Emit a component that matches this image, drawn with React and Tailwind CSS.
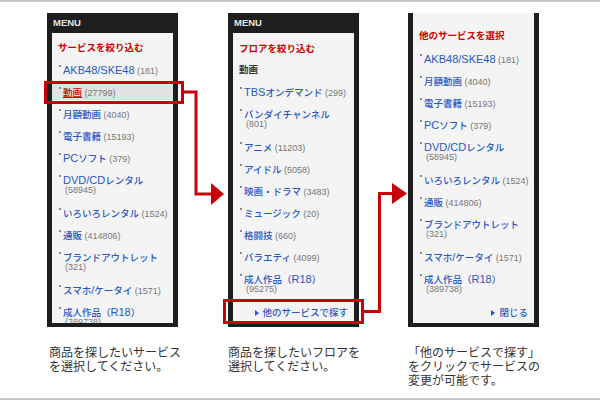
import React from 'react';

const services = [
  { label: 'AKB48/SKE48', count: '181' },
  { label: '動画', count: '27799', active: true },
  { label: '月額動画', count: '4040' },
  { label: '電子書籍', count: '15193' },
  { label: 'PCソフト', count: '379' },
  { label: 'DVD/CDレンタル', count: '58945', wrap: true },
  { label: 'いろいろレンタル', count: '1524' },
  { label: '通販', count: '414806' },
  { label: 'ブランドアウトレット', count: '321', wrap: true },
  { label: 'スマホ/ケータイ', count: '1571' },
  { label: '成人作品（R18）', count: '389738', wrap: true },
];

const floors = [
  { label: 'TBSオンデマンド', count: '299' },
  { label: 'バンダイチャンネル', count: '801', wrap: true },
  { label: 'アニメ', count: '11203' },
  { label: 'アイドル', count: '5058' },
  { label: '映画・ドラマ', count: '3483' },
  { label: 'ミュージック', count: '20' },
  { label: '格闘技', count: '660' },
  { label: 'バラエティ', count: '4099' },
  { label: '成人作品（R18）', count: '95275', wrap: true },
];

// latin runs a bit larger than the kana, like the original font
const Mixed = ({ text }) =>
  text
    .split(/([ -~]+)/)
    .filter(Boolean)
    .map((part, i) =>
      /^[ -~]+$/.test(part) ? (
        <span key={i} className="text-[11px]">{part}</span>
      ) : (
        <span key={i} className="text-[9.5px]">{part}</span>
      )
    );

const Item = ({ label, count, wrap, active }) => (
  <div className={`flex pl-[7px] ${active ? 'bg-[#e2e2e2] py-[3px] -my-[3px]' : ''}`}>
    <span className="w-[2px] h-[2px] bg-[#8a8a8a] mt-[3px] mr-[2px] shrink-0" />
    <div className="whitespace-nowrap">
      <div className="h-[13px] leading-[13px]">
        <span className={active ? 'text-[#d40000] underline font-medium' : 'text-[#2857c5] font-medium'}>
          <Mixed text={label} />
        </span>
        {!wrap && <span className="text-[9px] text-[#777]"> ({count})</span>}
      </div>
      {wrap && (
        <div className="h-[11px] text-[9px] leading-[11px] text-[#777] pl-[2px]">({count})</div>
      )}
    </div>
  </div>
);

const Tri = () => (
  <svg width="4" height="6" viewBox="0 0 4 6" className="shrink-0">
    <polygon points="0,0 4,3 0,6" fill="#2857c5" />
  </svg>
);

const Panel = ({ header, children }) => (
  <div className="w-[131px] h-[314px] bg-[#1e1e1e] px-[5px] pb-[4px] flex flex-col">
    {header && (
      <div className="h-[20px] shrink-0 flex items-center pl-[1px] text-[9.5px] font-bold text-[#e4e4e4]">MENU</div>
    )}
    <div className="flex-1 bg-[#f4f4f4] overflow-hidden">{children}</div>
  </div>
);

const Heading = ({ children, className = '' }) => (
  <div className={`h-[13px] pl-[6px] text-[9.5px] leading-[13px] font-bold whitespace-nowrap ${className}`}>{children}</div>
);

const Caption = ({ children, className = '' }) => (
  <div className={`mt-[18px] text-[12px] leading-[14px] text-[#333] whitespace-nowrap font-['Noto_Sans_CJK_JP',sans-serif] ${className}`}>
    {children}
  </div>
);

const More = ({ children, gap }) => (
  <div className={`mt-[11px] h-[13px] flex items-center justify-end pr-[6px] text-[9.5px] leading-[13px] font-medium text-[#2857c5] ${gap}`}>
    <Tri />
    <span>{children}</span>
  </div>
);

export default function App() {
  return (
    <div className="relative w-[600px] h-[400px] bg-white flex flex-col font-['Liberation_Sans','Noto_Sans_CJK_JP',sans-serif]">
      <div className="h-[2px] bg-[#c8c8c8]" />
      <div className="flex-1 flex pt-[11px] pl-[47px]">
        {/* column 1 */}
        <div className="w-[131px]">
          <Panel header>
            <div className="pt-[8px]">
              <Heading className="text-[#cc0000]">サービスを絞り込む</Heading>
              <div className="flex flex-col gap-[9px] mt-[8px]">
                {services.map((s) => (
                  <Item key={s.label} {...s} />
                ))}
              </div>
            </div>
          </Panel>
          <Caption className="pl-[2px]">
            商品を探したいサービス
            <br />
            を選択してください。
          </Caption>
        </div>

        {/* column 2 */}
        <div className="w-[131px] ml-[50px]">
          <Panel header>
            <div className="pt-[9px]">
              <Heading className="text-[#cc0000]">フロアを絞り込む</Heading>
              <Heading className="mt-[8px] text-[#333]">動画</Heading>
              <div className="flex flex-col gap-[9px] mt-[8px]">
                {floors.map((f) => (
                  <Item key={f.label} {...f} />
                ))}
              </div>
              <More gap="gap-[3px]">他のサービスで探す</More>
            </div>
          </Panel>
          <Caption>
            商品を探したいフロアを
            <br />
            選択してください。
          </Caption>
        </div>

        {/* column 3 */}
        <div className="w-[131px] ml-[49px]">
          <Panel>
            <div className="pt-[16px]">
              <Heading className="text-[#cc0000]">他のサービスを選択</Heading>
              <div className="flex flex-col gap-[9px] mt-[9px]">
                {services
                  .filter((s) => !s.active)
                  .map((s) => (
                    <Item key={s.label} {...s} />
                  ))}
              </div>
              <More gap="gap-[4px]">閉じる</More>
            </div>
          </Panel>
          <Caption>
            「他のサービスで探す」
            <br />
            をクリックでサービスの
            <br />
            変更が可能です。
          </Caption>
        </div>
      </div>
      <div className="h-[2px] bg-[#c8c8c8]" />

      {/* highlight boxes */}
      <div className="absolute left-[44px] top-[81px] w-[140px] h-[23px] border-[3px] border-[#c8000a]" />
      <div className="absolute left-[223px] top-[299px] w-[141px] h-[25px] border-[3px] border-[#c8000a]" />

      {/* connector arrows */}
      <svg className="absolute left-0 top-0 pointer-events-none" width="600" height="400" viewBox="0 0 600 400">
        <path d="M183 92 H196 V194 H212" fill="none" stroke="#c8000a" strokeWidth="3" />
        <polygon points="211,183 211,205 224,194" fill="#c8000a" />
        <path d="M363 311.5 H379.5 V193.5 H393" fill="none" stroke="#c8000a" strokeWidth="3" />
        <polygon points="392,183 392,204 407,193.5" fill="#c8000a" />
      </svg>
    </div>
  );
}
